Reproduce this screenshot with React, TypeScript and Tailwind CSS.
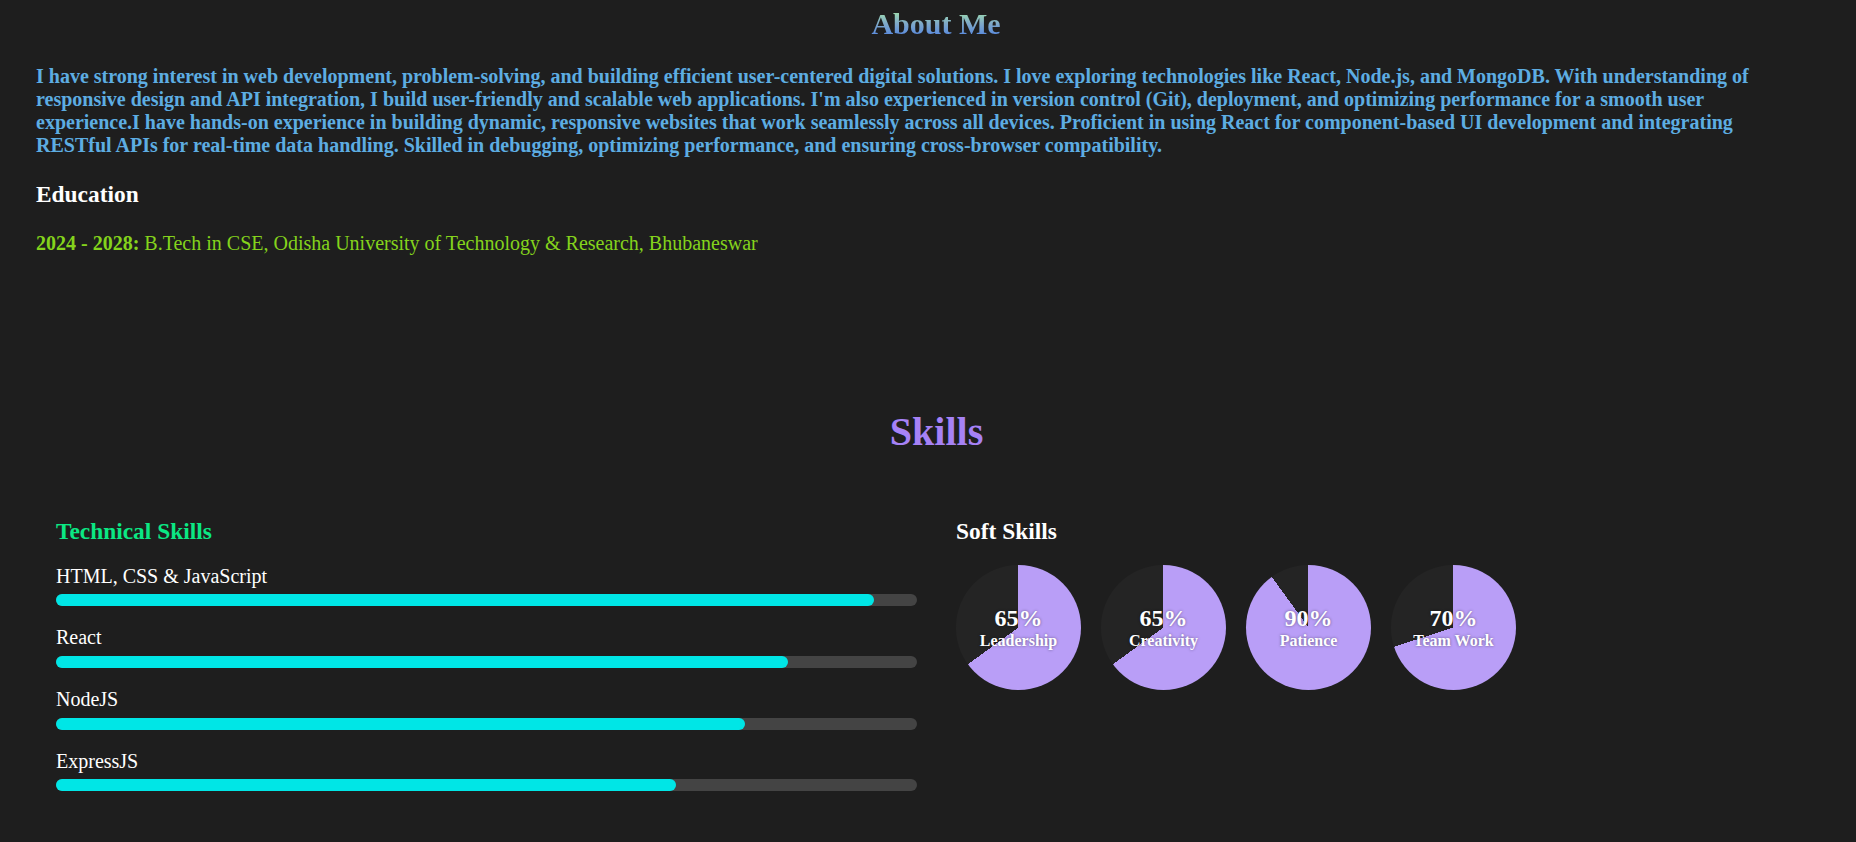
import React from "react";

const techSkills = [
  { name: "HTML, CSS & JavaScript", level: 95 },
  { name: "React", level: 85 },
  { name: "NodeJS", level: 80 },
  { name: "ExpressJS", level: 72 },
];

const softSkills = [
  { name: "Leadership", level: 65 },
  { name: "Creativity", level: 65 },
  { name: "Patience", level: 90 },
  { name: "Team Work", level: 70 },
];

function SkillBar({ name, level }: { name: string; level: number }) {
  return (
    <div className="mt-[20.2px]">
      <div className="text-[20px] leading-[23px] text-white">{name}</div>
      <div className="mt-[6.5px] h-[12px] w-full rounded-full bg-[#444444]">
        <div className="h-full rounded-full bg-[#00e6e6]" style={{ width: `${level}%` }} />
      </div>
    </div>
  );
}

function Pie({ name, level }: { name: string; level: number }) {
  return (
    <div
      className="flex h-[125px] w-[125px] shrink-0 flex-col items-center justify-center rounded-full text-white [text-shadow:0_0_3px_rgba(0,0,0,0.45)]"
      style={{ background: `conic-gradient(#b99ef7 0 ${level}%, #242424 ${level}% 100%)` }}
    >
      <span className="text-[24px] font-bold leading-[27.6px]">{level}%</span>
      <span className="text-[16px] font-bold leading-[18.4px]">{name}</span>
    </div>
  );
}

export default function App() {
  return (
    <div className="min-h-screen bg-[#1e1e1e] pb-10 font-['Liberation_Serif','Times_New_Roman',serif]">
      {/* about */}
      <section className="pl-[36px] pr-[20px] pt-[7px]">
        <h2 className="text-center text-[30px] font-bold leading-[34.5px]">
          <span className="bg-linear-to-b from-[#aef29a] via-[#7fa9c8] to-[#4c7be6] bg-clip-text text-transparent">
            About Me
          </span>
        </h2>
        <p className="mr-[46px] mt-[23.5px] text-[20px] font-bold leading-[23px] text-[#5dade2]">
          I have strong interest in web development, problem-solving, and building efficient user-centered digital
          solutions. I love exploring technologies like React, Node.js, and MongoDB. With understanding of responsive
          design and API integration, I build user-friendly and scalable web applications. I'm also experienced in
          version control (Git), deployment, and optimizing performance for a smooth user experience.I have hands-on
          experience in building dynamic, responsive websites that work seamlessly across all devices. Proficient in
          using React for component-based UI development and integrating RESTful APIs for real-time data handling.
          Skilled in debugging, optimizing performance, and ensuring cross-browser compatibility.
        </p>
        <h3 className="mt-[24px] text-[23.4px] font-bold leading-[27px] text-white">Education</h3>
        <p className="mt-[24px] text-[20px] leading-[23px] text-[#84d31c]">
          <b>2024 - 2028:</b> B.Tech in CSE, Odisha University of Technology &amp; Research, Bhubaneswar
        </p>
      </section>

      {/* skills */}
      <section className="mt-[154px] pl-[56px] pr-[39px]">
        <h2 className="text-center text-[40px] font-bold leading-[46px] text-[#a682f6]">Skills</h2>
        <div className="mt-[62.5px] grid grid-cols-2 gap-[39px]">
          <div>
            <h3 className="text-[23.4px] font-bold leading-[27px] text-[#0be884]">Technical Skills</h3>
            {techSkills.map((s) => (
              <SkillBar key={s.name} name={s.name} level={s.level} />
            ))}
          </div>
          <div>
            <h3 className="text-[23.4px] font-bold leading-[27px] text-white">Soft Skills</h3>
            <div className="mt-[20.5px] flex gap-[20px]">
              {softSkills.map((s) => (
                <Pie key={s.name} name={s.name} level={s.level} />
              ))}
            </div>
          </div>
        </div>
      </section>
    </div>
  );
}
